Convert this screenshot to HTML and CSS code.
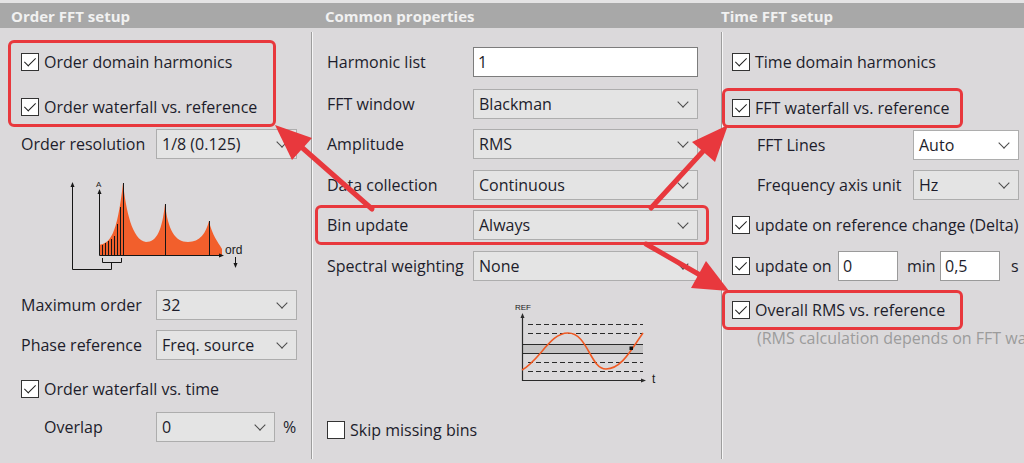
FILE: index.html
```html
<!DOCTYPE html>
<html lang="en">
<head>
  <meta charset="UTF-8" />
  <title>FFT setup</title>
  <link rel="stylesheet" href="styles.css">
</head>
<body>

  <div class="titles">
    <div class="title title-order">Order FFT setup</div>
    <div class="title title-common">Common properties</div>
    <div class="title title-time">Time FFT setup</div>
  </div>

  <div class="panels">

    <!-- Order FFT setup -->
    <section class="col col-order">
      <div class="mark mark-order">
        <div class="row"><span class="box on"></span>Order domain harmonics</div>
        <div class="row row-next"><span class="box on"></span>Order waterfall vs. reference</div>
      </div>
      <div class="row sp-2">
        <span class="lbl">Order resolution</span>
        <div class="select"><span>1/8 (0.125)</span><i class="chev"></i></div>
      </div>

      <svg class="order-chart" width="200" height="110" viewBox="0 0 200 110">
        <path d="M39,85 L39,75 C50,73 57,66 63,13 C66,40 72,70 86,72 C97,72 102,60 105,34 C108,60 115,72 128,72 C140,72 146,63 149,51 C152,65 158,72 162,79 L162,85 Z" fill="#f25f2c"/>
        <g stroke="#161616" stroke-width="1" fill="none">
          <path d="M42.5,85V75 M45.5,85V73 M48.5,85V71 M51.5,85V69 M54.5,85V66 M57.5,85V54 M60.5,85V37"/>
          <path d="M63.5,85V13 M105.5,85V34 M149.5,85V51"/>
          <path d="M39.5,22V85.5H161"/>
          <path d="M12.5,15V99.5H51.5V92.5"/>
          <path d="M42.5,88V92.5H61.5V88"/>
          <path d="M175.5,87V95"/>
        </g>
        <g fill="#161616">
          <path d="M39.5,19 L37.5,24 L41.5,24 Z"/>
          <path d="M12.5,12 L10.5,17 L14.5,17 Z"/>
          <path d="M164,85.5 L159,83.5 L159,87.5 Z"/>
          <path d="M175.5,98 L173.5,93 L177.5,93 Z"/>
        </g>
        <text x="36" y="17" class="chart-txt" font-size="8">A</text>
        <text x="165" y="84" class="chart-txt" font-size="12">ord</text>
      </svg>

      <div class="row sp-10">
        <span class="lbl">Maximum order</span>
        <div class="select"><span>32</span><i class="chev"></i></div>
      </div>
      <div class="row sp-10">
        <span class="lbl">Phase reference</span>
        <div class="select"><span>Freq. source</span><i class="chev"></i></div>
      </div>
      <div class="row sp-14"><span class="box on"></span>Order waterfall vs. time</div>
      <div class="row sp-8">
        <span class="lbl indent">Overlap</span>
        <div class="select short"><span>0</span><i class="chev"></i></div>
        <span class="unit">%</span>
      </div>
    </section>

    <!-- Common properties -->
    <section class="col col-common">
      <div class="row sp-15">
        <span class="lbl">Harmonic list</span>
        <div class="field">1</div>
      </div>
      <div class="row sp-12">
        <span class="lbl">FFT window</span>
        <div class="select"><span>Blackman</span><i class="chev"></i></div>
      </div>
      <div class="row sp-10">
        <span class="lbl">Amplitude</span>
        <div class="select"><span>RMS</span><i class="chev"></i></div>
      </div>
      <div class="row sp-11">
        <span class="lbl">Data collection</span>
        <div class="select"><span>Continuous</span><i class="chev"></i></div>
      </div>
      <div class="mark mark-bin sp-5">
        <div class="row">
          <span class="lbl">Bin update</span>
          <div class="select"><span>Always</span><i class="chev"></i></div>
        </div>
      </div>
      <div class="row sp-6">
        <span class="lbl">Spectral weighting</span>
        <div class="select"><span>None</span><i class="chev"></i></div>
      </div>

      <svg class="ref-chart" width="180" height="100" viewBox="0 0 180 100">
        <rect x="22" y="54" width="121" height="9" fill="#c5c4c5"/>
        <g stroke="#2a2a2a" stroke-width="1.2" fill="none">
          <path d="M28,34.5H143 M28,43.5H143 M28,72.5H143 M28,81.5H143" stroke-dasharray="5 3"/>
          <path d="M22,54.5H143 M22,63.5H143"/>
          <path d="M22.5,26V90.5H143"/>
        </g>
        <path d="M22,80 C40,70 50,43 68,43 C88,43 90,79 106,79 C122,79 132,58 143,43" stroke="#f05a24" stroke-width="1.6" fill="none"/>
        <rect x="129.5" y="56.5" width="3.5" height="3.5" fill="#111"/>
        <g fill="#2a2a2a">
          <path d="M22.5,23 L20.5,28 L24.5,28 Z"/>
          <path d="M146,90.5 L141,88.5 L141,92.5 Z"/>
        </g>
        <text x="15" y="20" class="chart-txt" font-size="8">REF</text>
        <text x="152" y="93" class="chart-txt" font-size="12">t</text>
      </svg>

      <div class="row sp-25"><span class="box"></span>Skip missing bins</div>
    </section>

    <!-- Time FFT setup -->
    <section class="col col-time">
      <div class="row sp-15"><span class="box on"></span>Time domain harmonics</div>
      <div class="mark mark-time sp-11">
        <div class="row"><span class="box on"></span>FFT waterfall vs. reference</div>
      </div>
      <div class="row sp-2">
        <span class="lbl">FFT Lines</span>
        <div class="select white"><span>Auto</span><i class="chev"></i></div>
      </div>
      <div class="row sp-10">
        <span class="lbl">Frequency axis unit</span>
        <div class="select"><span>Hz</span><i class="chev"></i></div>
      </div>
      <div class="row sp-10"><span class="box on"></span>update on reference change (Delta)</div>
      <div class="row sp-11">
        <span class="box on"></span><span class="upd">update on</span>
        <div class="field num">0</div>
        <span class="unit-min">min</span>
        <div class="field num">0,5</div>
        <span class="unit-s">s</span>
      </div>
      <div class="mark mark-time sp-9">
        <div class="row"><span class="box on"></span>Overall RMS vs. reference</div>
      </div>
      <div class="note">(RMS calculation depends on FFT waterfall)</div>
    </section>

  </div>

  <!-- callout arrows drawn over the dialog -->
  <svg class="arrows" width="1024" height="463" viewBox="0 0 1024 463">
    <g stroke="#e8383d" stroke-width="5" stroke-linecap="round">
      <path d="M372,209 L298,144"/>
      <path d="M651,208 L706,148"/>
      <path d="M646,244 L700,275"/>
    </g>
    <g fill="#e8383d">
      <path d="M275,125 L312,138 L292,160 Z"/>
      <path d="M728,125 L715,162 L692,142 Z"/>
      <path d="M729,291 L691,288 L706,261 Z"/>
    </g>
  </svg>

</body>
</html>
```

FILE: styles.css
```css
body {
  margin: 0;
  width: 1024px;
  height: 463px;
  overflow: hidden;
  position: relative;
  background-color: #dbd9db;
  font-family: "Open Sans", "Liberation Sans", Arial, sans-serif;
  font-size: 16px;
  color: #1d1d2b;
}

/* Section title bar */
.titles {
  display: grid;
  grid-template-columns: 311px 410px 1fr;
  align-items: center;
  height: 25px;
  border-top: 3px solid #e4e3e4;
  background-color: #a8a8a8;
  color: #f1f1f1;
  font-weight: bold;
  font-size: 15px;
}

.title-order { padding-left: 11px; }
.title-common { padding-left: 14px; }
.title-time { padding-left: 0; }

/* Columns */
.panels {
  display: grid;
  grid-template-columns: 311px 410px 1fr;
  height: 431px;
  padding-top: 4px;
  box-sizing: border-box;
}

.col {
  display: flex;
  flex-direction: column;
  align-items: flex-start;
  overflow: hidden;
}

.col + .col {
  border-left: 1px solid #9d9d9d;
  box-shadow: inset 1px 0 #f6f6f6;
}

.col-order { padding-left: 21px; }
.col-common { padding-left: 15px; }
.col-time { padding-left: 10px; }

.row {
  display: flex;
  align-items: center;
  height: 30px;
  white-space: nowrap;
  flex: none;
}

.sp-2 { margin-top: 2px; }
.sp-5 { margin-top: 5px; }
.sp-6 { margin-top: 6px; }
.sp-8 { margin-top: 8px; }
.sp-9 { margin-top: 9px; }
.sp-10 { margin-top: 10px; }
.sp-11 { margin-top: 11px; }
.sp-12 { margin-top: 12px; }
.sp-14 { margin-top: 14px; }
.sp-15 { margin-top: 15px; }
.sp-25 { margin-top: 25px; }

.lbl {
  flex: none;
  box-sizing: border-box;
}

.col-order .lbl { width: 135px; }
.col-order .lbl.indent { padding-left: 23px; }
.col-common .lbl { width: 146px; }
.col-time .lbl { width: 181px; padding-left: 25px; }

/* Checkbox */
.box {
  position: relative;
  flex: none;
  width: 18px;
  height: 18px;
  margin-right: 5px;
  box-sizing: border-box;
  border: 1px solid #333;
  background-color: #fff;
}

.box.on::after {
  content: "";
  position: absolute;
  left: 5px;
  top: 1px;
  width: 5px;
  height: 10px;
  border: solid #1e1e1e;
  border-width: 0 1.4px 1.4px 0;
  transform: rotate(45deg);
}

/* Dropdowns and fields */
.select {
  display: flex;
  align-items: center;
  justify-content: space-between;
  height: 30px;
  box-sizing: border-box;
  padding: 0 10px 0 5px;
  border: 1px solid #adadad;
  background-color: #e4e4e4;
}

.col-order .select { width: 141px; }
.col-order .select.short { width: 119px; }
.col-common .select { width: 225px; }
.col-time .select { width: 106px; }

.select.white {
  background-color: #fff;
}

.chev {
  width: 7px;
  height: 7px;
  margin-top: -5px;
  border: solid #4a4a4a;
  border-width: 0 1px 1px 0;
  transform: rotate(45deg);
}

.field {
  display: flex;
  align-items: center;
  width: 225px;
  height: 30px;
  box-sizing: border-box;
  padding: 0 4px;
  border: 1px solid #7c7c7c;
  background-color: #fff;
}

.field.num {
  width: 60px;
  border-color: #9a9a9a;
}

.upd { width: 83px; }
.unit { margin-left: 8px; }
.unit-min { width: 42px; box-sizing: border-box; padding-left: 9px; }
.unit-s { margin-left: 11px; }

/* Red highlight boxes */
.mark {
  flex: none;
  border: 3px solid #e8383d;
  border-radius: 6px;
  box-sizing: border-box;
}

.mark-order {
  width: 268px;
  margin: 8px 0 0 -13px;
  padding: 4px 0 2px 10px;
}

.mark-order .row-next { margin-top: 15px; }

.mark-bin {
  width: 394px;
  margin-left: -12px;
  padding: 2px 0 2px 9px;
}

.mark-time {
  width: 241px;
  margin-left: -10px;
  padding: 2px 0 2px 7px;
}

.note {
  height: 16px;
  line-height: 16px;
  padding-left: 25px;
  white-space: nowrap;
  color: #9c9c9c;
}

/* Pictures */
.order-chart {
  margin: 11px 0 0 39px;
  flex: none;
}

.ref-chart {
  margin: 9px 0 0 173px;
  flex: none;
}

.chart-txt {
  font-family: "Liberation Sans", Arial, sans-serif;
  fill: #1a1a1a;
}

.arrows {
  position: absolute;
  left: 0;
  top: 0;
  pointer-events: none;
}
```
